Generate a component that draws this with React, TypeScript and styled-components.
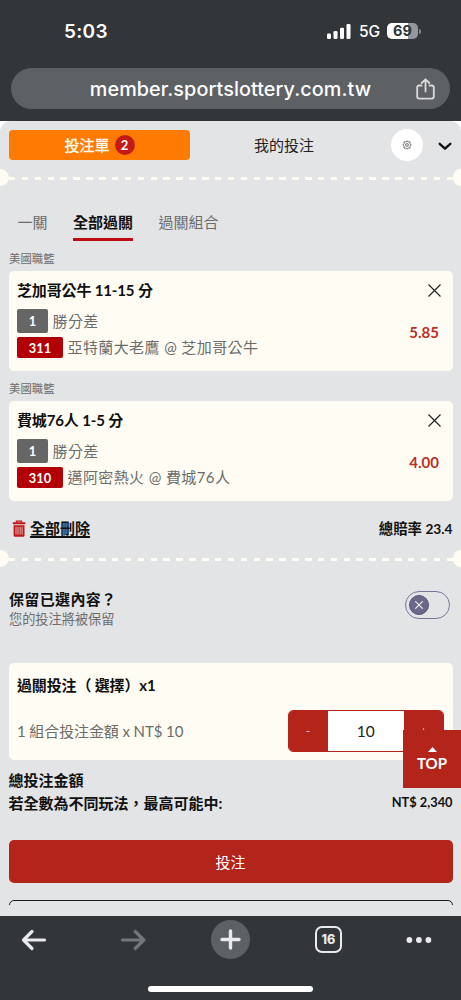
import React from 'react';
import styled, { createGlobalStyle } from 'styled-components';

const GlobalStyle = createGlobalStyle`
  *, *::before, *::after { box-sizing: border-box; }
  html, body { margin: 0; padding: 0; }
  body {
    width: 461px;
    height: 1000px;
    overflow: hidden;
    font-family: Lato, "Noto Sans CJK TC", sans-serif;
    color: #111;
  }
  button { font: inherit; border: 0; padding: 0; margin: 0; background: none; color: inherit; }
  svg { display: block; flex: none; }
`;

const Screen = styled.div`
  width: 461px;
  height: 1000px;
  display: flex;
  flex-direction: column;
  overflow: hidden;
  background: #323639;
`;

/* ---------- browser chrome ---------- */

const BrowserTop = styled.header`
  height: 121px;
  flex: none;
  padding: 0 11px;
  font-family: Inter, "Liberation Sans", sans-serif;
  color: #fff;
`;

const StatusBar = styled.div`
  height: 68px;
  display: flex;
  align-items: center;
  justify-content: space-between;
  padding: 0 29px 6px 53px;
`;

const Clock = styled.div`
  font-size: 19px;
  font-weight: 600;
  letter-spacing: 0.3px;
`;

const StatusIcons = styled.div`
  display: flex;
  align-items: center;
`;

const Network = styled.span`
  width: 21px;
  margin: 1px 7px 0 8px;
  font-size: 15.5px;
  font-weight: 500;
  letter-spacing: -0.2px;
  white-space: nowrap;
`;

const Battery = styled.div`
  width: 31px;
  height: 16px;
  border-radius: 5px;
  background: linear-gradient(90deg, #fff 69%, #95989a 69%);
  color: #323639;
  font-size: 14.5px;
  font-weight: 700;
  line-height: 16px;
  text-align: center;
`;

const BatteryCap = styled.i`
  width: 2px;
  height: 5px;
  margin-left: 1px;
  border-radius: 0 2px 2px 0;
  background: #85888a;
`;

const AddressBar = styled.div`
  height: 41px;
  border-radius: 21px;
  background: #5d6164;
  display: flex;
  align-items: center;
  padding-right: 15px;
`;

const Address = styled.div`
  flex: 1;
  padding-left: 34px;
  text-align: center;
  font-size: 19.8px;
  font-weight: 500;
  letter-spacing: 0.08px;
  line-height: 40px;
`;

const BrowserBottom = styled.footer`
  height: 84px;
  flex: none;
  display: flex;
  flex-direction: column;
  align-items: center;
  color: #e8eaed;
`;

const NavRow = styled.div`
  width: 100%;
  height: 48px;
  padding: 4px 0 5px 20px;
  display: grid;
  grid-template-columns: 98.5px 92.5px 104px 91px auto;
  align-items: center;
  justify-items: start;
`;

const NewTab = styled.button`
  width: 39px;
  height: 39px;
  border-radius: 50%;
  background: #5d6164;
  display: grid;
  place-items: center;
`;

const TabCount = styled.button`
  width: 27px;
  height: 27px;
  border: 2.6px solid #e8eaed;
  border-radius: 7px;
  font: 800 12.5px/22px Inter, sans-serif;
  text-align: center;
`;

const HomeIndicator = styled.div`
  width: 165px;
  height: 6px;
  margin-top: 22px;
  border-radius: 3px;
  background: #fff;
`;

/* ---------- page ---------- */

const Page = styled.main`
  height: 795px;
  flex: none;
  background: #fff;
`;

const Slip = styled.section`
  position: relative;
  height: 795px;
  overflow: hidden;
  border-radius: 11px 11px 0 0;
  background: #e3e4e6;
  display: flex;
  flex-direction: column;
`;

const SlipHeader = styled.div`
  height: 48px;
  flex: none;
  padding: 9px 9px 0;
  display: flex;
  align-items: center;
`;

const SlipTab = styled.button<{ $active?: boolean }>`
  width: ${(p) => (p.$active ? 181 : 188)}px;
  height: 30px;
  margin-bottom: 9px;
  padding-bottom: 1px;
  border-radius: 4px;
  display: flex;
  align-items: center;
  justify-content: center;
  gap: 5px;
  font-size: 15px;
  line-height: 20px;
  -webkit-text-stroke: ${(p) => (p.$active ? '0.35px #fffdf3' : '0')};
  background: ${(p) => (p.$active ? '#ff7a00' : 'transparent')};
  color: ${(p) => (p.$active ? '#fffdf3' : '#222')};
`;

const CountBadge = styled.span`
  width: 20px;
  height: 20px;
  border-radius: 50%;
  background: #c51a15;
  color: #fff;
  font-size: 13px;
  font-weight: 700;
  line-height: 20px;
  text-align: center;
  -webkit-text-stroke: 0;
`;

const RoundButton = styled.button`
  width: 32px;
  height: 32px;
  margin: 0 15px 9px 13px;
  border-radius: 50%;
  background: #fff;
  display: grid;
  place-items: center;
`;

const ChevronButton = styled.button`
  margin-bottom: 7px;
`;

const TearLine = styled.div`
  height: 17px;
  flex: none;
  display: flex;
  align-items: center;
  justify-content: space-between;
  background: repeating-linear-gradient(90deg, #fffdf3 0 6.5px, transparent 6.5px 12.87px) 8.5px 8px / 444.3px 3px no-repeat;
`;

const Notch = styled.i<{ $right?: boolean }>`
  width: 8.5px;
  height: 17px;
  background: #fffdf3;
  border-radius: ${(p) => (p.$right ? '9px 0 0 9px' : '0 9px 9px 0')};
`;

const ModeTabs = styled.nav`
  height: 55px;
  flex: none;
  padding: 0 17.5px;
  display: flex;
  align-items: flex-end;
  gap: 25.5px;
`;

const ModeTab = styled.button<{ $active?: boolean }>`
  height: 33px;
  padding-bottom: 2px;
  font-size: 15px;
  line-height: 27px;
  font-weight: ${(p) => (p.$active ? 700 : 400)};
  color: ${(p) => (p.$active ? '#111' : '#6c6c6c')};
  border-bottom: 3.6px solid ${(p) => (p.$active ? '#bd0d12' : 'transparent')};
`;

const League = styled.div`
  height: 30px;
  flex: none;
  padding: 4px 9px 0;
  font-size: 11.4px;
  line-height: 27px;
  color: #6c6c6c;
`;

const Card = styled.article<{ $height: number }>`
  height: ${(p) => p.$height}px;
  flex: none;
  margin: 0 8.5px;
  padding: 9px 8.5px 0;
  border-radius: 5px;
  background: #fffdf3;
`;

const BetCard = styled(Card)`
  display: flex;
  justify-content: space-between;
`;

const BetTitle = styled.h3`
  margin: 0;
  height: 29px;
  font-size: 15px;
  font-weight: 700;
  line-height: 21px;
  letter-spacing: -0.15px;
  white-space: nowrap;
`;

const BetLine = styled.div<{ $height: number }>`
  height: ${(p) => p.$height}px;
  display: flex;
  align-items: center;
  gap: 4.5px;
  margin-bottom: 3.5px;
  font-size: 15px;
  line-height: 22px;
  color: #6c6c6c;
  letter-spacing: 0.4px;
  white-space: nowrap;
`;

const Tag = styled.span<{ $red?: boolean }>`
  width: ${(p) => (p.$red ? 46 : 31)}px;
  height: 100%;
  border-radius: 2px;
  background: ${(p) => (p.$red ? '#b20006' : '#666')};
  color: #fff;
  font-size: 12.8px;
  font-weight: 700;
  letter-spacing: 0;
  display: grid;
  place-items: center;
`;

const BetSide = styled.div`
  display: flex;
  flex-direction: column;
  align-items: flex-end;
  padding: 4px 3px 0 0;
`;

const Odds = styled.div`
  margin: 24.5px 2px 0 0;
  font-size: 15px;
  font-weight: 700;
  line-height: 20px;
  color: #bb3028;
`;

const SummaryRow = styled.div`
  height: 49px;
  flex: none;
  padding: 8px 8.5px 0 12px;
  display: flex;
  align-items: flex-start;
  justify-content: space-between;
  font-weight: 700;
  line-height: 40px;
`;

const DeleteAll = styled.button`
  height: 38px;
  display: flex;
  align-items: center;
  gap: 4px;
  font-size: 15px;
  text-decoration: underline;
  text-decoration-thickness: 1.5px;
  text-underline-offset: 2px;
`;

const TotalOdds = styled.div`
  font-size: 14.4px;
`;

const LatinSmall = styled.span`
  font-size: 13.7px;
`;

const KeepRow = styled.div`
  height: 96px;
  flex: none;
  padding: 21px 11px 0 9px;
  display: flex;
  justify-content: space-between;
`;

const KeepTitle = styled.div`
  font-size: 15px;
  font-weight: 700;
  line-height: 22px;
  letter-spacing: 0.35px;
  white-space: nowrap;
`;

const KeepNote = styled.div`
  font-size: 13.2px;
  line-height: 19px;
  color: #6c6c6c;
`;

const Toggle = styled.button`
  width: 45px;
  height: 28px;
  margin-top: 3px;
  padding-left: 3px;
  border: 1.3px solid #78779b;
  border-radius: 14px;
  display: flex;
  align-items: center;
`;

const Knob = styled.i`
  width: 20px;
  height: 20px;
  border-radius: 50%;
  background: #6a6987;
  border: 1px solid #55547c;
  display: grid;
  place-items: center;
`;

const StakeTitle = styled(BetTitle)`
  height: 38px;
  padding-top: 3px;
`;

const StakeRow = styled.div`
  display: flex;
  justify-content: space-between;
  font-size: 15px;
  line-height: 42px;
  letter-spacing: -0.1px;
  color: #6c6c6c;
`;

const Stepper = styled.div`
  width: 156.5px;
  height: 41.5px;
  display: grid;
  grid-template-columns: 39px 1fr 39px;
  border: 1px solid #b3241a;
  border-radius: 5px;
  overflow: hidden;
  background: #fff;
  color: #222;
  text-align: center;
  line-height: 40px;
  font-size: 15.5px;
`;

const StepButton = styled.button`
  background: #b3241a;
  color: #f3cfc9;
  font-size: 12px;
`;

const TotalRow = styled.div`
  height: 23px;
  flex: none;
  padding: 0 8.5px;
  display: flex;
  justify-content: space-between;
  align-items: center;
  font-size: 15px;
  font-weight: 700;
  white-space: nowrap;
`;

const Totals = styled.div`
  height: 80px;
  flex: none;
  padding-top: 7.5px;
`;

const Payout = styled.span`
  font-size: 12.8px;
`;

const PlaceBet = styled.button`
  height: 43px;
  flex: none;
  margin: 0 8.5px;
  border-radius: 5px;
  background: #b3241a;
  color: #fff;
  font-size: 15px;
  line-height: 42px;
`;

const NextButtonClip = styled.div`
  height: 5px;
  flex: none;
  margin: 17px 8.5px 0;
  overflow: hidden;
`;

const NextButton = styled.div`
  height: 43px;
  border: 1.3px solid #1c1a1a;
  border-radius: 5px;
`;

const BackToTop = styled.button`
  position: absolute;
  right: 0;
  top: 608.5px;
  width: 58px;
  height: 58px;
  background: #b3241a;
  color: #fff;
  display: flex;
  flex-direction: column;
  align-items: center;
  padding-top: 17px;
  font-size: 15px;
  font-weight: 700;
  line-height: 22px;
`;

/* ---------- icons ---------- */

const SignalIcon = () => (
  <svg width="24" height="15" viewBox="0 0 24 15" fill="#fff">
    <rect x="0" y="9.5" width="4" height="5.5" rx="1.2" />
    <rect x="6.5" y="7" width="4" height="8" rx="1.2" />
    <rect x="13" y="3.7" width="4" height="11.3" rx="1.2" />
    <rect x="19.5" y="0" width="4" height="15" rx="1.2" />
  </svg>
);

const ShareIcon = () => (
  <svg width="19" height="22" viewBox="0 0 19 22" fill="none" stroke="#d9dbdd" strokeWidth="1.8" strokeLinecap="round" strokeLinejoin="round">
    <path d="M5.5 7.5H3.2Q1.2 7.5 1.2 9.5V18.6Q1.2 20.6 3.2 20.6H15.8Q17.8 20.6 17.8 18.6V9.5Q17.8 7.5 15.8 7.5H13.5" />
    <path d="M9.5 13.5V1.5M5.7 5L9.5 1.3L13.3 5" />
  </svg>
);

const GearIcon = () => (
  <svg width="10" height="10" viewBox="0 0 20 20" fill="none" stroke="#555" strokeWidth="1.7" strokeLinejoin="round">
    <path d="M10 1.5L12.3 4L15.9 3.8L16 7.5L18.5 10L16 12.5L15.9 16.2L12.3 16L10 18.5L7.7 16L4.1 16.2L4 12.5L1.5 10L4 7.5L4.1 3.8L7.7 4Z" />
    <circle cx="10" cy="10" r="2.8" />
  </svg>
);

const ChevronIcon = () => (
  <svg width="14" height="9" viewBox="0 0 14 9" fill="none" stroke="#111" strokeWidth="2.4" strokeLinecap="round" strokeLinejoin="round">
    <path d="M1.7 1.8L7 6.7L12.3 1.8" />
  </svg>
);

const CloseIcon = ({ size = 13, color = '#222', weight = 1.2 }: { size?: number; color?: string; weight?: number }) => (
  <svg width={size} height={size} viewBox="0 0 13 13" fill="none" stroke={color} strokeWidth={weight}>
    <path d="M0.5 0.5L12.5 12.5M12.5 0.5L0.5 12.5" />
  </svg>
);

const TrashIcon = () => (
  <svg width="14" height="17" viewBox="0 0 14 17">
    <path d="M4.5 2.5V1.2H9.5V2.5" fill="none" stroke="#c01518" strokeWidth="1.3" />
    <rect x="0.8" y="2.2" width="12.6" height="2.1" rx="0.6" fill="#c01518" />
    <path d="M1.6 5.2H12.5V15.2Q12.5 16.7 11 16.7H3.1Q1.6 16.7 1.6 15.2Z" fill="#c01518" />
    <path d="M4 6.8V14.6M6 6.8V14.6M8.1 6.8V14.6M10.1 6.8V14.6" stroke="#e9c5c6" strokeWidth="0.9" />
  </svg>
);

const ArrowIcon = ({ forward }: { forward?: boolean }) => (
  <svg width="28" height="24" viewBox="0 0 28 24" fill="none" stroke={forward ? '#75787b' : '#e8eaed'} strokeWidth="3.2" strokeLinecap="round" strokeLinejoin="round">
    {forward ? <path d="M3.5 12H25M16.2 3.5L24.8 12L16.2 20.5" /> : <path d="M24.5 12H3.5M12 3.5L3.5 12L12 20.5" />}
  </svg>
);

const PlusIcon = () => (
  <svg width="21" height="21" viewBox="0 0 21 21" stroke="#e8eaed" strokeWidth="3.4" strokeLinecap="round">
    <path d="M10.5 2V19M2 10.5H19" />
  </svg>
);

const MoreIcon = () => (
  <svg width="26" height="6" viewBox="0 0 26 6" fill="#e8eaed">
    <circle cx="3.4" cy="3" r="2.9" />
    <circle cx="12.9" cy="3" r="2.9" />
    <circle cx="22.4" cy="3" r="2.9" />
  </svg>
);

const CaretUp = () => (
  <svg width="9" height="5" viewBox="0 0 9 5" fill="#fff">
    <path d="M4.5 0L9 5H0Z" />
  </svg>
);

/* ---------- content ---------- */

const bets = [
  { title: '芝加哥公牛 11-15 分', code: '311', match: '亞特蘭大老鷹 @ 芝加哥公牛', odds: '5.85' },
  { title: '費城76人 1-5 分', code: '310', match: '邁阿密熱火 @ 費城76人', odds: '4.00' },
];

const Divider = () => (
  <TearLine>
    <Notch />
    <Notch $right />
  </TearLine>
);

export default function App() {
  return (
    <Screen>
      <GlobalStyle />
      <BrowserTop>
        <StatusBar>
          <Clock>5:03</Clock>
          <StatusIcons>
            <SignalIcon />
            <Network>5G</Network>
            <Battery>69</Battery>
            <BatteryCap />
          </StatusIcons>
        </StatusBar>
        <AddressBar>
          <Address>member.sportslottery.com.tw</Address>
          <ShareIcon />
        </AddressBar>
      </BrowserTop>

      <Page>
        <Slip>
          <SlipHeader>
            <SlipTab $active>
              投注單<CountBadge>2</CountBadge>
            </SlipTab>
            <SlipTab>我的投注</SlipTab>
            <RoundButton><GearIcon /></RoundButton>
            <ChevronButton><ChevronIcon /></ChevronButton>
          </SlipHeader>
          <Divider />
          <ModeTabs>
            <ModeTab>一關</ModeTab>
            <ModeTab $active>全部過關</ModeTab>
            <ModeTab>過關組合</ModeTab>
          </ModeTabs>

          {bets.map((bet) => (
            <React.Fragment key={bet.code}>
              <League>美國職籃</League>
              <BetCard $height={100}>
                <div>
                  <BetTitle>{bet.title}</BetTitle>
                  <BetLine $height={24}><Tag>1</Tag>勝分差</BetLine>
                  <BetLine $height={21.5}><Tag $red>{bet.code}</Tag>{bet.match}</BetLine>
                </div>
                <BetSide>
                  <CloseIcon />
                  <Odds>{bet.odds}</Odds>
                </BetSide>
              </BetCard>
            </React.Fragment>
          ))}

          <SummaryRow>
            <DeleteAll><TrashIcon />全部刪除</DeleteAll>
            <TotalOdds>總賠率 <LatinSmall>23.4</LatinSmall></TotalOdds>
          </SummaryRow>
          <Divider />

          <KeepRow>
            <div>
              <KeepTitle>保留已選內容？</KeepTitle>
              <KeepNote>您的投注將被保留</KeepNote>
            </div>
            <Toggle>
              <Knob><CloseIcon size={8} color="#f1f1f5" weight={1.8} /></Knob>
            </Toggle>
          </KeepRow>

          <Card $height={97}>
            <StakeTitle>過關投注（ 選擇）x1</StakeTitle>
            <StakeRow>
              <span>1 組合投注金額 x NT$ 10</span>
              <Stepper>
                <StepButton>-</StepButton>
                <span>10</span>
                <StepButton>+</StepButton>
              </Stepper>
            </StakeRow>
          </Card>

          <Totals>
            <TotalRow>總投注金額</TotalRow>
            <TotalRow>若全數為不同玩法，最高可能中:<Payout>NT$ 2,340</Payout></TotalRow>
          </Totals>
          <PlaceBet>投注</PlaceBet>
          <NextButtonClip><NextButton /></NextButtonClip>
          <BackToTop><CaretUp />TOP</BackToTop>
        </Slip>
      </Page>

      <BrowserBottom>
        <NavRow>
          <ArrowIcon />
          <ArrowIcon forward />
          <NewTab><PlusIcon /></NewTab>
          <TabCount>16</TabCount>
          <MoreIcon />
        </NavRow>
        <HomeIndicator />
      </BrowserBottom>
    </Screen>
  );
}
